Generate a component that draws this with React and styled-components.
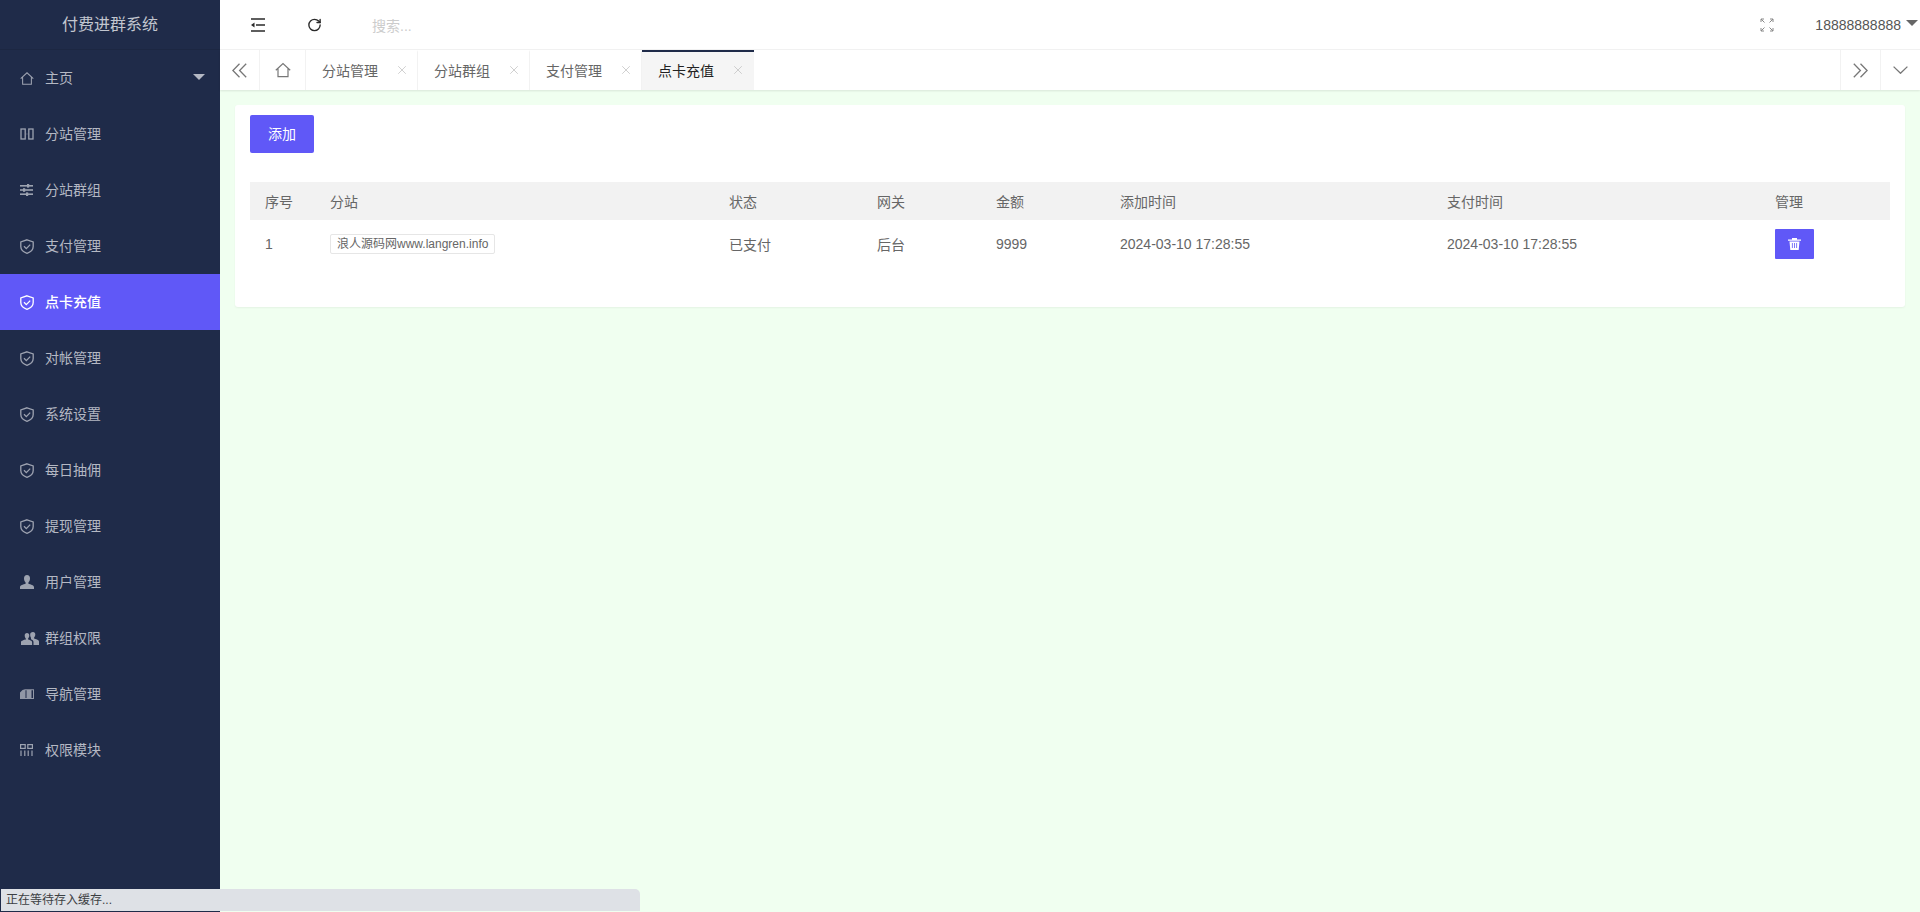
import styled, { createGlobalStyle } from 'styled-components';
import { RotateCw, X } from 'lucide-react';

const GlobalStyle = createGlobalStyle`
    html, body {
        margin: 0;
        padding: 0;
        height: 100%;
        overflow: hidden;
    }
    body {
        font-family: "Liberation Sans", "Noto Sans CJK SC", sans-serif;
        font-size: 14px;
        color: #666;
    }
    * {
        box-sizing: border-box;
    }
`;

const primary = '#6058f7';
const navy = '#1f2b49';

const Page = styled.div`
    display: flex;
    height: 912px;
    background-color: #f0fff0;
`;

const Side = styled.aside`
    width: 220px;
    flex-shrink: 0;
    background-color: ${navy};
`;

const Logo = styled.div`
    height: 50px;
    line-height: 49px;
    text-align: center;
    font-size: 16px;
    color: #c2c6cf;
    border-bottom: 1px solid #1c2742;
`;

const MenuList = styled.ul`
    list-style: none;
    margin: 0;
    padding: 0;
`;

const MenuItem = styled.li`
    display: flex;
    align-items: center;
    height: 56px;
    padding: 0 0 2px 20px;
    gap: 11px;
    color: ${(p) => (p.$active ? '#fff' : '#b4b8c3')};
    background-color: ${(p) => (p.$active ? primary : 'transparent')};
    font-weight: ${(p) => (p.$active ? 500 : 'normal')};
`;

const MenuIcon = styled.span`
    display: flex;
    width: 14px;
    height: 16px;
    align-items: center;
    flex-shrink: 0;
    margin-top: 2px;
    opacity: ${(p) => (p.$active ? 1 : 0.85)};
`;

const MenuCaret = styled.i`
    margin-left: auto;
    margin-right: 15px;
    border-style: solid;
    border-width: 6px 6px 0;
    border-color: #b4b8c3 transparent transparent;
`;

const Main = styled.main`
    flex: 1;
    min-width: 0;
    display: flex;
    flex-direction: column;
`;

const TopBar = styled.header`
    display: flex;
    align-items: center;
    height: 50px;
    padding-left: 30px;
    background-color: #fff;
    border-bottom: 1px solid #f2f2f2;
`;

const TopIcon = styled.span`
    display: flex;
    width: ${(p) => p.$w}px;
    color: #2a2a2a;
`;

const Search = styled.span`
    margin-left: 50px;
    color: #ccc;
    font-size: 14px;
`;

const TopRight = styled.div`
    margin-left: auto;
    display: flex;
    align-items: center;
`;

const UserName = styled.span`
    margin-left: 41px;
    color: #555;
`;

const UserCaret = styled.i`
    margin: 0 2px 3px 5px;
    border-style: solid;
    border-width: 6px 6px 0;
    border-color: #666 transparent transparent;
`;

const TabBar = styled.nav`
    display: flex;
    height: 40px;
    background-color: #fff;
    box-shadow: 0 1px 2px rgba(0, 0, 0, 0.1);
    position: relative;
`;

const TabBtn = styled.div`
    display: flex;
    align-items: center;
    justify-content: center;
    width: ${(p) => p.$w}px;
    color: #777;
    border-right: ${(p) => (p.$left ? '1px solid #f2f2f2' : 'none')};
    border-left: ${(p) => (p.$right ? '1px solid #f2f2f2' : 'none')};
`;

const Tab = styled.div`
    display: flex;
    align-items: center;
    width: 112px;
    padding: 0 0 3px 16px;
    color: ${(p) => (p.$active ? '#222' : '#666')};
    background-color: ${(p) => (p.$active ? '#f5f5f5' : '#fff')};
    border-right: ${(p) => (p.$active ? 'none' : '1px solid #f2f2f2')};
    border-top: 2px solid ${(p) => (p.$active ? navy : 'transparent')};
`;

const TabClose = styled(X)`
    margin-left: 17px;
    color: #bbb;
`;

const TabSpacer = styled.div`
    flex: 1;
`;

const Content = styled.section`
    padding: 15px;
`;

const Card = styled.div`
    background-color: #fff;
    border-radius: 3px;
    box-shadow: 0 1px 2px rgba(0, 0, 0, 0.05);
    padding: 10px 15px 39px;
`;

const AddButton = styled.button`
    display: block;
    width: 64px;
    height: 38px;
    padding: 0 0 2px;
    border: none;
    border-radius: 2px;
    background-color: ${primary};
    color: #fff;
    font: inherit;
`;

const Table = styled.table`
    width: 100%;
    margin-top: 29px;
    border-collapse: collapse;
    table-layout: fixed;
`;

const Th = styled.th`
    width: ${(p) => (p.$w ? `${p.$w}px` : 'auto')};
    height: 38px;
    padding: 0 15px 1px;
    text-align: left;
    font-weight: normal;
    color: #666;
    background-color: #f2f2f2;
`;

const Td = styled.td`
    height: 48px;
    padding: 0 15px 1px;
    color: #666;
`;

const SiteTag = styled.span`
    display: inline-block;
    height: 20px;
    line-height: 18px;
    margin-top: 1px;
    padding: 0 6px;
    font-size: 12px;
    color: #666;
    border: 1px solid #e6e6e6;
    border-radius: 2px;
    white-space: nowrap;
`;

const DeleteButton = styled.button`
    display: flex;
    align-items: center;
    justify-content: center;
    width: 39px;
    height: 30px;
    padding: 0;
    border: none;
    border-radius: 1px;
    background-color: ${primary};
`;

const StatusBubble = styled.div`
    position: fixed;
    left: 1px;
    bottom: 1px;
    width: 639px;
    height: 22px;
    line-height: 22px;
    padding-left: 5px;
    font-size: 12px;
    color: #3c4043;
    background-color: #dee1e6;
    border-top-right-radius: 5px;
`;

const HomeIcon = ({ size = 15 }) => (
    <svg width={size} height={size} viewBox="0 0 16 16" fill="none" stroke="currentColor" strokeWidth="1.2">
        <path d="M.8 8.200 8 1.500l7.200 6.700M3 6.600v8h10v-8" />
    </svg>
);

const ColumnsIcon = () => (
    <svg width="14" height="12" viewBox="0 0 14 12" fill="none" stroke="currentColor" strokeWidth="1.300">
        <rect x="1" y="1" width="4.200" height="10" />
        <rect x="8.800" y="1" width="4.200" height="10" />
        <path d="M6.800 6h.4" />
    </svg>
);

const SlidersIcon = () => (
    <svg width="13" height="12" viewBox="0 0 13 12" fill="currentColor">
        <rect x="0" y="1" width="13" height="1.600" />
        <rect x="7" y="0" width="2.200" height="3.600" />
        <rect x="0" y="5.200" width="13" height="1.600" />
        <rect x="3" y="4.200" width="2.200" height="3.600" />
        <rect x="0" y="9.400" width="13" height="1.600" />
        <rect x="6" y="8.400" width="2.200" height="3.600" />
    </svg>
);

const ShieldIcon = () => (
    <svg width="14" height="15" viewBox="0 0 14 15" fill="none" stroke="currentColor" strokeWidth="1.300">
        <path d="M7 .8 13.200 3v4.500c0 3.300-2.700 5.600-6.200 6.800C3.500 13.100.8 10.800.8 7.500V3z" />
        <path d="m4 7.300 2.300 2.300L10.200 5.600" />
    </svg>
);

const UserIcon = () => (
    <svg width="14" height="14" viewBox="0 0 14 14" fill="currentColor">
        <path d="M7 0c2 0 3 1.500 3 3.400 0 2-.9 3.300-1.600 4v1.300c1.800.6 5.600 1.400 5.600 3.300v2H0v-2c0-1.900 3.800-2.700 5.600-3.300V7.400C4.900 6.700 4 5.400 4 3.400 4 1.500 5 0 7 0z" />
    </svg>
);

const UsersIcon = () => (
    <svg width="18" height="13" viewBox="0 0 18 13" fill="currentColor" style={{ flexShrink: 0, marginLeft: 1 }}>
        <path d="M6 1c1.500 0 2.300 1.100 2.300 2.600 0 1.400-.7 2.400-1.200 3v1c1.300.4 4 1.100 4 2.600V13H0v-2.800c0-1.500 3.300-2.200 4.800-2.600v-1C4.300 6 3.700 5 3.700 3.600 3.700 2.100 4.500 1 6 1z" />
        <path d="M12 0c1.500 0 2.300 1.100 2.300 2.600 0 1.400-.7 2.400-1.200 3v1c1.400.4 4.900 1.300 4.900 3V13h-5.500v-3c0-1.300-1.300-2.200-2.500-2.700V5.800c-.5-.6-.8-1.400-.8-2.700C8.700 1.300 10.500 0 12 0z" />
    </svg>
);

const NavIcon = () => (
    <svg width="14" height="10" viewBox="0 0 14 10" fill="currentColor">
        <path d="M0 3.500 2.500 1 5 .2h9V10H0zM5.500 1.200v7.800h1V1.200zm6 0v7.800h1.500V1.200z" fillRule="evenodd" opacity=".9" />
    </svg>
);

const GridIcon = () => (
    <svg width="13" height="12" viewBox="0 0 13 12" fill="none" stroke="currentColor" strokeWidth="1.200">
        <rect x=".6" y=".6" width="4.600" height="3.800" />
        <rect x="7.800" y=".6" width="4.600" height="3.800" />
        <path d="M1 6.500V12M4.800 6.500V12M8.200 6.500V12M12 6.500V12" />
    </svg>
);

const IndentIcon = () => (
    <svg width="16" height="14" viewBox="0 0 16 14" fill="none" stroke="currentColor" strokeWidth="1.600">
        <path d="M1 1h14M6 7h9M1 13h14" />
        <path d="M4.500 4.500v5L1 7z" fill="currentColor" stroke="none" />
    </svg>
);

const FullIcon = () => (
    <svg width="14" height="14" viewBox="0 0 14 14" fill="none" stroke="#888" strokeWidth="1">
        <path d="M1 4V1h3M1 1l3.500 3.500M10 1h3v3M13 1 9.500 4.500M1 10v3h3M1 13l3.500-3.500M10 13h3v-3M13 13 9.500 9.500" />
    </svg>
);

const TrashIcon = () => (
    <svg width="13" height="12" viewBox="0 0 13 12" fill="#fff">
        <path d="M0 1.500h13v1.300H0zM4 0h5v1.500H4zM1.500 3.400h10L10.700 12H2.300z" />
        <path d="M4.400 5v5M6.500 5v5M8.600 5v5" stroke={primary} strokeWidth=".8" />
    </svg>
);

const DoubleLeft = () => (
    <svg width="15" height="15" viewBox="0 0 15 15" fill="none" stroke="currentColor" strokeWidth="1.300">
        <path d="M7.500 .8.900 7.500l6.600 6.700M14.200 .8 7.600 7.500l6.600 6.700" />
    </svg>
);

const DoubleRight = () => (
    <svg width="15" height="15" viewBox="0 0 15 15" fill="none" stroke="currentColor" strokeWidth="1.300">
        <path d="m.8 .8 6.600 6.700-6.600 6.700M7.500 .8l6.600 6.700-6.600 6.700" />
    </svg>
);

const DownIcon = () => (
    <svg width="15" height="8" viewBox="0 0 15 8" fill="none" stroke="currentColor" strokeWidth="1.300">
        <path d="m.6 .6 6.900 6.700L14.400 .6" />
    </svg>
);

const menus = [
    { name: '主页', icon: <HomeIcon />, caret: true },
    { name: '分站管理', icon: <ColumnsIcon /> },
    { name: '分站群组', icon: <SlidersIcon /> },
    { name: '支付管理', icon: <ShieldIcon /> },
    { name: '点卡充值', icon: <ShieldIcon />, active: true },
    { name: '对帐管理', icon: <ShieldIcon /> },
    { name: '系统设置', icon: <ShieldIcon /> },
    { name: '每日抽佣', icon: <ShieldIcon /> },
    { name: '提现管理', icon: <ShieldIcon /> },
    { name: '用户管理', icon: <UserIcon /> },
    { name: '群组权限', icon: <UsersIcon /> },
    { name: '导航管理', icon: <NavIcon /> },
    { name: '权限模块', icon: <GridIcon /> },
];

const tabs = ['分站管理', '分站群组', '支付管理', '点卡充值'];

const columns = [
    { name: '序号', w: 65 },
    { name: '分站', w: 399 },
    { name: '状态', w: 148 },
    { name: '网关', w: 119 },
    { name: '金额', w: 124 },
    { name: '添加时间', w: 327 },
    { name: '支付时间', w: 328 },
    { name: '管理' },
];

export default function App() {
    return (
        <Page>
            <GlobalStyle />
            <Side>
                <Logo>付费进群系统</Logo>
                <MenuList>
                    {menus.map((m) => (
                        <MenuItem key={m.name} $active={m.active}>
                            <MenuIcon $active={m.active}>{m.icon}</MenuIcon>
                            {m.name}
                            {m.caret ? <MenuCaret /> : null}
                        </MenuItem>
                    ))}
                </MenuList>
            </Side>
            <Main>
                <TopBar>
                    <TopIcon $w={57}>
                        <IndentIcon />
                    </TopIcon>
                    <TopIcon $w={15}>
                        <RotateCw size={16} strokeWidth={2.2} />
                    </TopIcon>
                    <Search>搜索...</Search>
                    <TopRight>
                        <FullIcon />
                        <UserName>18888888888</UserName>
                        <UserCaret />
                    </TopRight>
                </TopBar>
                <TabBar>
                    <TabBtn $w={40} $left>
                        <DoubleLeft />
                    </TabBtn>
                    <TabBtn $w={46} $left>
                        <HomeIcon size={16} />
                    </TabBtn>
                    {tabs.map((t, i) => (
                        <Tab key={t} $active={i === 3}>
                            {t}
                            <TabClose size={14} strokeWidth={1.2} />
                        </Tab>
                    ))}
                    <TabSpacer />
                    <TabBtn $w={40} $right>
                        <DoubleRight />
                    </TabBtn>
                    <TabBtn $w={40} $right>
                        <DownIcon />
                    </TabBtn>
                </TabBar>
                <Content>
                    <Card>
                        <AddButton>添加</AddButton>
                        <Table>
                            <thead>
                                <tr>
                                    {columns.map((c) => (
                                        <Th key={c.name} $w={c.w}>
                                            {c.name}
                                        </Th>
                                    ))}
                                </tr>
                            </thead>
                            <tbody>
                                <tr>
                                    <Td>1</Td>
                                    <Td>
                                        <SiteTag>浪人源码网www.langren.info</SiteTag>
                                    </Td>
                                    <Td>已支付</Td>
                                    <Td>后台</Td>
                                    <Td>9999</Td>
                                    <Td>2024-03-10 17:28:55</Td>
                                    <Td>2024-03-10 17:28:55</Td>
                                    <Td>
                                        <DeleteButton>
                                            <TrashIcon />
                                        </DeleteButton>
                                    </Td>
                                </tr>
                            </tbody>
                        </Table>
                    </Card>
                </Content>
            </Main>
            <StatusBubble>正在等待存入缓存...</StatusBubble>
        </Page>
    );
}
